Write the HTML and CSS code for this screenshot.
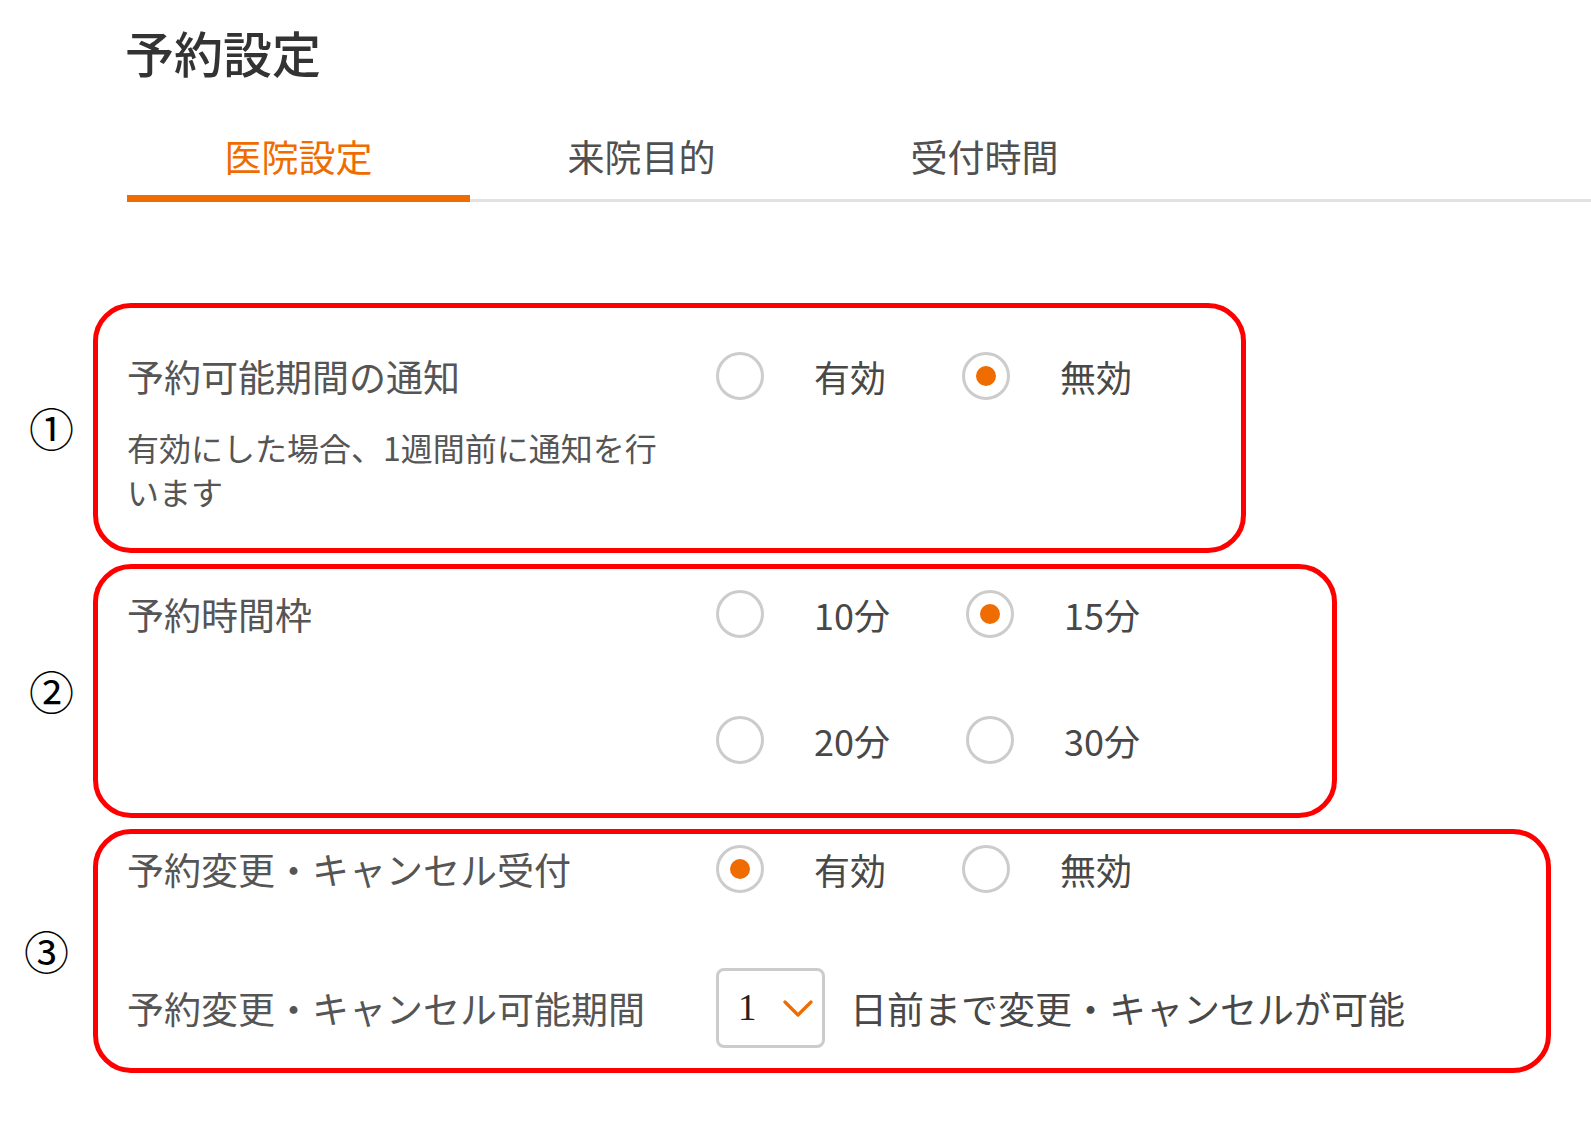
FILE: index.html
```html
<!DOCTYPE html>
<html lang="ja">
<head>
<meta charset="utf-8">
<title>予約設定</title>
<link rel="stylesheet" href="styles.css">
</head>
<body>
<div class="page">
  <h1 class="title">予約設定</h1>
  <nav class="tabs">
    <div class="tab active">医院設定</div>
    <div class="tab">来院目的</div>
    <div class="tab">受付時間</div>
  </nav>

  <div class="sections">
    <section class="sec">
      <div class="num num-shift">①</div>
      <div class="box box1">
        <div class="row">
          <div class="label-col">
            <div class="label">予約可能期間の通知</div>
            <div class="sub">有効にした場合、1週間前に通知を行います</div>
          </div>
          <div class="opts">
            <div class="opt"><span class="radio"></span><span class="opt-text">有効</span></div>
            <div class="opt"><span class="radio on"></span><span class="opt-text">無効</span></div>
          </div>
        </div>
      </div>
    </section>

    <section class="sec">
      <div class="num num-shift">②</div>
      <div class="box box2">
        <div class="row">
          <div class="label-col">
            <div class="label">予約時間枠</div>
          </div>
          <div class="opt-grid">
            <div class="opts">
              <div class="opt"><span class="radio"></span><span class="opt-text">10分</span></div>
              <div class="opt"><span class="radio on"></span><span class="opt-text">15分</span></div>
            </div>
            <div class="opts">
              <div class="opt"><span class="radio"></span><span class="opt-text">20分</span></div>
              <div class="opt"><span class="radio"></span><span class="opt-text">30分</span></div>
            </div>
          </div>
        </div>
      </div>
    </section>

    <section class="sec">
      <div class="num">③</div>
      <div class="box box3">
        <div class="row">
          <div class="label-col">
            <div class="label">予約変更・キャンセル受付</div>
          </div>
          <div class="opts">
            <div class="opt"><span class="radio on"></span><span class="opt-text">有効</span></div>
            <div class="opt"><span class="radio"></span><span class="opt-text">無効</span></div>
          </div>
        </div>
        <div class="row row-select">
          <div class="label-col">
            <div class="label">予約変更・キャンセル可能期間</div>
          </div>
          <div class="select">
            <span class="select-val">1</span>
            <svg class="chev" width="30" height="18" viewBox="0 0 30 18"><polyline points="2,2 15,15 28,2" fill="none" stroke="#ef6c00" stroke-width="3.2" stroke-linecap="round" stroke-linejoin="round"/></svg>
          </div>
          <div class="after">日前まで変更・キャンセルが可能</div>
        </div>
      </div>
    </section>
  </div>
</div>
</body>
</html>
```

FILE: styles.css
```css
html, body {
  margin: 0;
  padding: 0;
  background: #ffffff;
}
body {
  font-family: "Noto Sans CJK JP", "Noto Sans", sans-serif;
  color: #505050;
}
.page {
  padding-top: 23px;
}
.title {
  margin: 0 0 0 125px;
  font-size: 49px;
  line-height: 58px;
  font-weight: 500;
  color: #333333;
}
.tabs {
  display: flex;
  margin: 51px 0 0 127px;
  border-bottom: 3px solid #e2e2e2;
}
.tab {
  width: 343px;
  text-align: center;
  font-size: 37px;
  line-height: 48px;
  padding-bottom: 15px;
  margin-bottom: -3px;
  border-bottom: 7px solid transparent;
  color: #505050;
}
.tab.active {
  color: #ef6c00;
  border-bottom-color: #ef6c00;
}
.sections {
  margin-top: 101px;
  display: flex;
  flex-direction: column;
  gap: 11px;
}
.sec {
  display: flex;
  align-items: center;
}
.num {
  width: 93px;
  text-align: center;
  font-size: 45px;
  line-height: 50px;
  color: #000000;
  box-sizing: border-box;
}
.num-shift {
  padding-left: 10px;
}
.box {
  box-sizing: border-box;
  border: 5px solid #ff0000;
  border-radius: 38px;
  padding-left: 29px;
}
.box1 {
  width: 1153px;
  height: 250px;
  padding-top: 44px;
}
.box2 {
  width: 1244px;
  height: 254px;
  padding-top: 21px;
}
.box3 {
  width: 1458px;
  height: 244px;
  padding-top: 11px;
  display: flex;
  flex-direction: column;
  gap: 75px;
}
.row {
  display: flex;
  align-items: flex-start;
}
.label-col {
  width: 589px;
  flex: none;
}
.label {
  font-size: 37px;
  line-height: 48px;
  color: #555555;
  white-space: nowrap;
}
.sub {
  margin-top: 25px;
  width: 545px;
  font-size: 32px;
  line-height: 44px;
  color: #555555;
}
.opt-grid {
  display: flex;
  flex-direction: column;
  gap: 78px;
}
.opts {
  display: flex;
  gap: 76px;
}
.opt {
  display: flex;
  align-items: center;
  gap: 50px;
  height: 48px;
}
.opt-text {
  font-size: 36px;
  line-height: 48px;
  color: #484848;
}
.radio {
  width: 48px;
  height: 48px;
  box-sizing: border-box;
  border: 3px solid #cccccc;
  border-radius: 50%;
  display: flex;
  align-items: center;
  justify-content: center;
  flex: none;
}
.radio.on::after {
  content: "";
  width: 20px;
  height: 20px;
  border-radius: 50%;
  background: #ef6c00;
}
.row-select {
  align-items: center;
  height: 80px;
}
.select {
  width: 109px;
  height: 80px;
  box-sizing: border-box;
  border: 3px solid #cccccc;
  border-radius: 8px;
  display: flex;
  align-items: center;
  padding-left: 19px;
  flex: none;
}
.select-val {
  font-family: "Liberation Serif", serif;
  font-size: 37px;
  line-height: 40px;
  color: #222222;
}
.chev {
  margin-left: 26px;
  margin-top: 2px;
}
.after {
  margin-left: 25px;
  font-size: 37px;
  line-height: 48px;
  color: #484848;
  white-space: nowrap;
}
```
